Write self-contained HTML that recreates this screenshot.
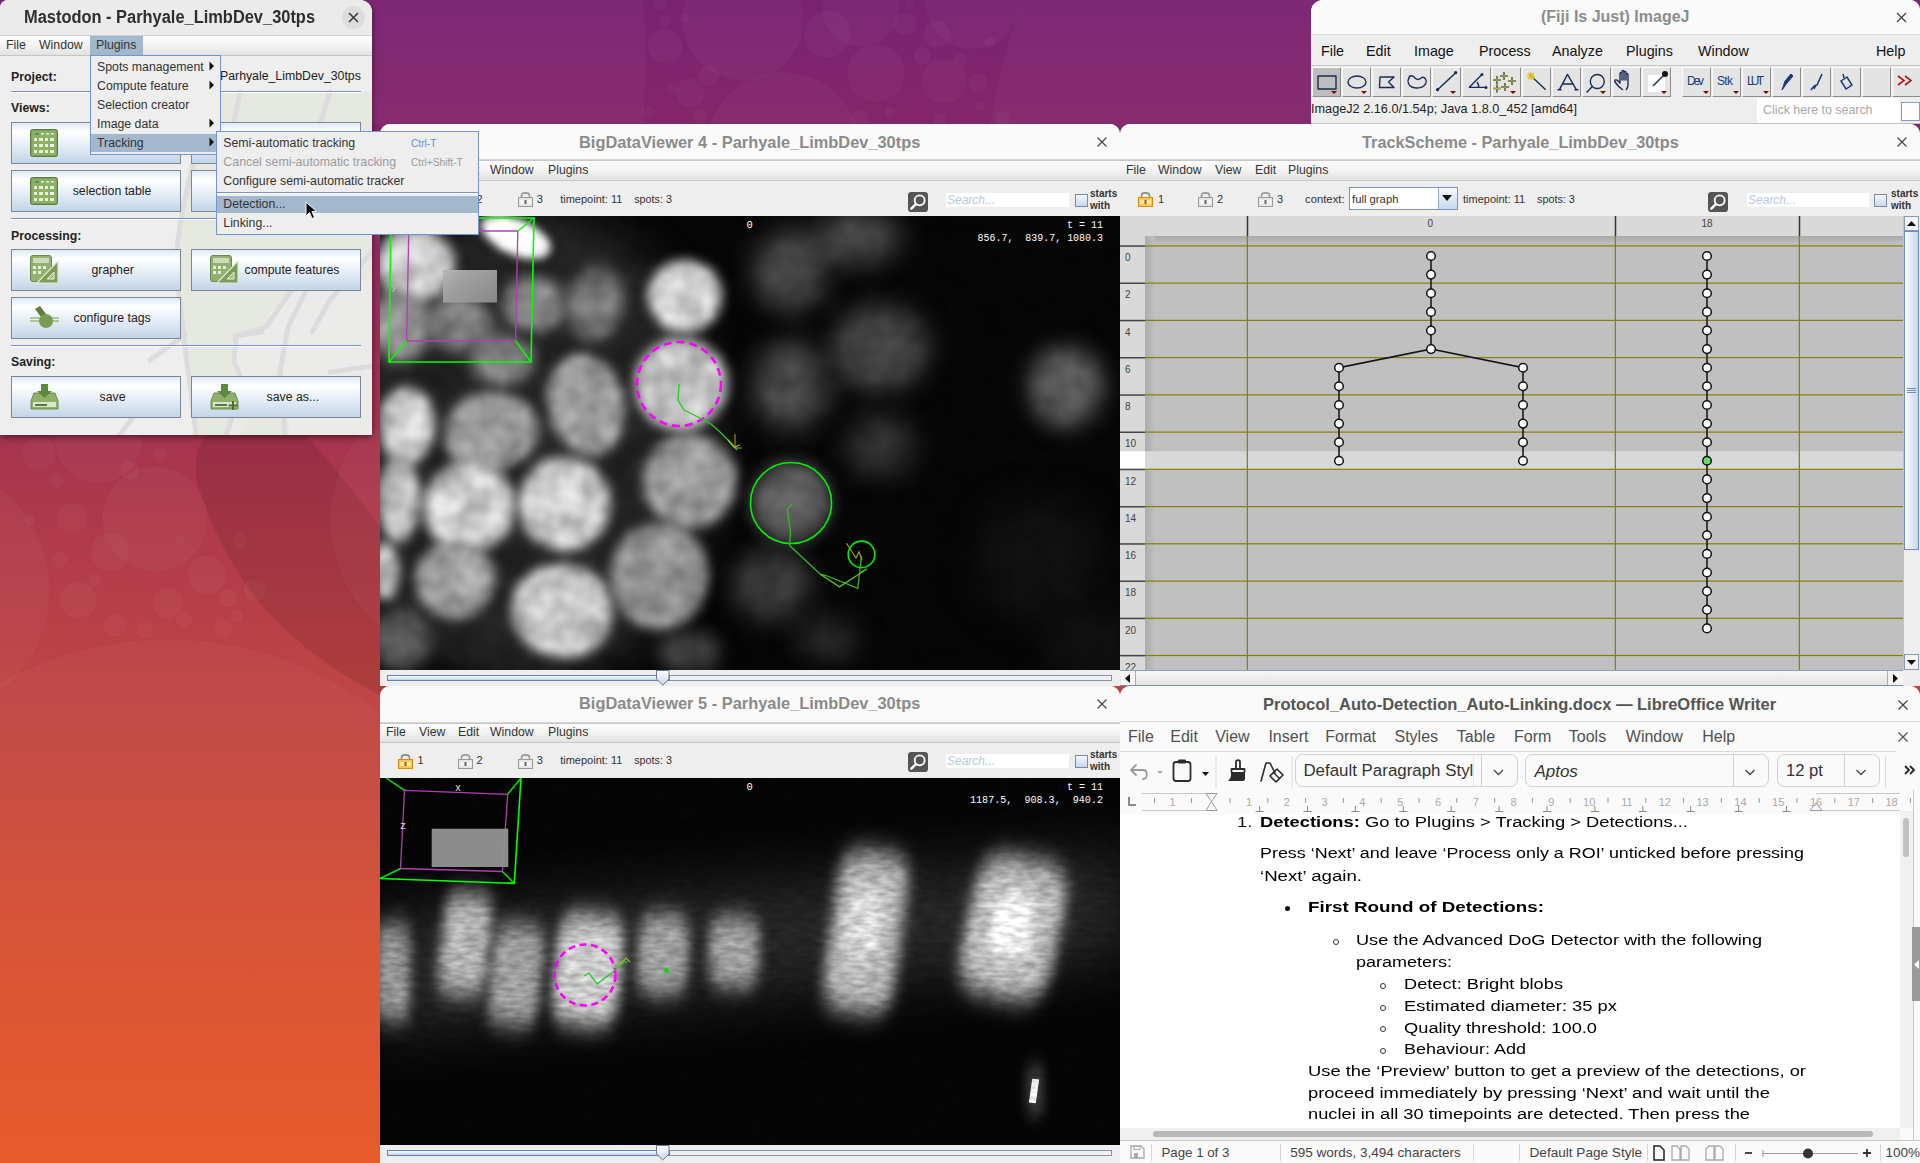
<!DOCTYPE html>
<html><head><meta charset="utf-8">
<style>
*{box-sizing:border-box}
html,body{margin:0;padding:0}
body{width:1920px;height:1163px;overflow:hidden;position:relative;font-family:"Liberation Sans",sans-serif;background:#8a2a6c}
.a{position:absolute}
.t{position:absolute;white-space:nowrap;line-height:1}
#bg{position:absolute;left:0;top:0;width:1920px;height:1163px;background:linear-gradient(180deg,#7f2776 0%,#8a2a70 12%,#a8344f 45%,#c84a3c 70%,#e45828 100%)}
.win{position:absolute;overflow:hidden;background:#eeeeee}
.ttl{position:absolute;left:0;right:0;top:0;background:#fafafa;border-bottom:1px solid #d6d6d6}
.ttx{position:absolute;font-weight:bold;font-size:17px;color:#8b8b8b;white-space:nowrap;line-height:1}
.mbar{position:absolute;left:0;right:0;background:linear-gradient(180deg,#fdfdfd 0%,#f4f4f4 45%,#e2e2e2 100%);border-top:1px solid #c8c8c8;border-bottom:1px solid #c8c8c8}
.mi{position:absolute;font-size:13px;color:#333;white-space:nowrap;line-height:1}
.lbl{position:absolute;font-size:12px;color:#333;white-space:nowrap;line-height:1}
.btn{border:1px solid #7b8794;background:linear-gradient(180deg,#dfe9f4 0%,#ffffff 22%,#e6eef7 55%,#c3d5e8 100%)}
.mono{font-family:"Liberation Mono",monospace}
</style></head>
<body>
<div id="bg"></div>
<svg id="bgsvg" class="a" style="left:0;top:0" width="1920" height="1163" viewBox="0 0 1920 1163">
<defs><linearGradient id="bgg" x1="0" y1="0" x2="0" y2="1">
<stop offset="0" stop-color="#792271"/>
<stop offset="0.107" stop-color="#84266a"/>
<stop offset="0.37" stop-color="#a6334f"/>
<stop offset="0.6" stop-color="#bf4644"/>
<stop offset="0.8" stop-color="#d64f32"/>
<stop offset="1" stop-color="#e85726"/>
</linearGradient>
<clipPath id="cTop"><rect x="0" y="0" width="1920" height="124"/></clipPath>
<clipPath id="cLeft"><rect x="0" y="430" width="390" height="733"/></clipPath></defs>
<rect width="1920" height="1163" fill="url(#bgg)"/>
<g clip-path="url(#cTop)">
<circle cx="-200" cy="62" r="846" fill="#ffffff" fill-opacity="0.032" stroke="#000" stroke-opacity="0.035" stroke-width="1"/>
<circle cx="1700" cy="250" r="722" fill="#ffffff" fill-opacity="0.032" stroke="#000" stroke-opacity="0.035" stroke-width="1"/>
<circle cx="743" cy="20" r="61" fill="#ffffff" fill-opacity="0.032" stroke="#000" stroke-opacity="0.035" stroke-width="1"/>
<circle cx="783" cy="150" r="78" fill="#ffffff" fill-opacity="0.032" stroke="#000" stroke-opacity="0.035" stroke-width="1"/>
<circle cx="861" cy="8" r="39" fill="#ffffff" fill-opacity="0.032" stroke="#000" stroke-opacity="0.035" stroke-width="1"/>
<circle cx="973" cy="0" r="49" fill="#ffffff" fill-opacity="0.032" stroke="#000" stroke-opacity="0.035" stroke-width="1"/>
<circle cx="665" cy="46" r="18" fill="#ffffff" fill-opacity="0.032" stroke="#000" stroke-opacity="0.035" stroke-width="1"/>
<circle cx="827" cy="34" r="24" fill="#ffffff" fill-opacity="0.032" stroke="#000" stroke-opacity="0.035" stroke-width="1"/>
<circle cx="876" cy="73" r="29" fill="#ffffff" fill-opacity="0.032" stroke="#000" stroke-opacity="0.035" stroke-width="1"/>
<circle cx="944" cy="81" r="23" fill="#ffffff" fill-opacity="0.032" stroke="#000" stroke-opacity="0.035" stroke-width="1"/>
<circle cx="937" cy="34" r="14" fill="#ffffff" fill-opacity="0.032" stroke="#000" stroke-opacity="0.035" stroke-width="1"/>
<circle cx="905" cy="24" r="12" fill="#ffffff" fill-opacity="0.032" stroke="#000" stroke-opacity="0.035" stroke-width="1"/>
<circle cx="690" cy="93" r="15" fill="#ffffff" fill-opacity="0.032" stroke="#000" stroke-opacity="0.035" stroke-width="1"/>
<circle cx="709" cy="76" r="11" fill="#ffffff" fill-opacity="0.032" stroke="#000" stroke-opacity="0.035" stroke-width="1"/>
<circle cx="978" cy="83" r="10" fill="#ffffff" fill-opacity="0.032" stroke="#000" stroke-opacity="0.035" stroke-width="1"/>
<circle cx="922" cy="56" r="9" fill="#ffffff" fill-opacity="0.032" stroke="#000" stroke-opacity="0.035" stroke-width="1"/>
<circle cx="660" cy="2" r="8" fill="#ffffff" fill-opacity="0.032" stroke="#000" stroke-opacity="0.035" stroke-width="1"/>
<circle cx="665" cy="21" r="6" fill="#ffffff" fill-opacity="0.032" stroke="#000" stroke-opacity="0.035" stroke-width="1"/>
<circle cx="684" cy="18" r="5" fill="#ffffff" fill-opacity="0.032" stroke="#000" stroke-opacity="0.035" stroke-width="1"/>
<circle cx="672" cy="89" r="6" fill="#ffffff" fill-opacity="0.032" stroke="#000" stroke-opacity="0.035" stroke-width="1"/>
<circle cx="961" cy="60" r="7" fill="#ffffff" fill-opacity="0.032" stroke="#000" stroke-opacity="0.035" stroke-width="1"/>
<circle cx="990" cy="42" r="6" fill="#ffffff" fill-opacity="0.032" stroke="#000" stroke-opacity="0.035" stroke-width="1"/>
<circle cx="980" cy="106" r="5" fill="#ffffff" fill-opacity="0.032" stroke="#000" stroke-opacity="0.035" stroke-width="1"/>
<circle cx="1003" cy="118" r="8" fill="#ffffff" fill-opacity="0.032" stroke="#000" stroke-opacity="0.035" stroke-width="1"/>
<circle cx="940" cy="120" r="7" fill="#ffffff" fill-opacity="0.032" stroke="#000" stroke-opacity="0.035" stroke-width="1"/>
<circle cx="890" cy="112" r="6" fill="#ffffff" fill-opacity="0.032" stroke="#000" stroke-opacity="0.035" stroke-width="1"/>
<circle cx="910" cy="4" r="5" fill="#ffffff" fill-opacity="0.032" stroke="#000" stroke-opacity="0.035" stroke-width="1"/>
<circle cx="648" cy="112" r="7" fill="#ffffff" fill-opacity="0.032" stroke="#000" stroke-opacity="0.035" stroke-width="1"/>
<circle cx="700" cy="116" r="8" fill="#ffffff" fill-opacity="0.032" stroke="#000" stroke-opacity="0.035" stroke-width="1"/>
<circle cx="860" cy="118" r="9" fill="#ffffff" fill-opacity="0.032" stroke="#000" stroke-opacity="0.035" stroke-width="1"/>
</g>
<g clip-path="url(#cLeft)">
<path d="M215 430 C190 440 192 480 205 505 C215 535 240 580 262 606 C290 636 330 672 390 700 L390 540 C360 500 330 460 300 430 Z" fill="#1a0000" fill-opacity="0.1"/>
<circle cx="-80" cy="590" r="130" fill="#ffffff" fill-opacity="0.032" stroke="#000" stroke-opacity="0.035" stroke-width="1"/>
<circle cx="155" cy="519" r="53" fill="#ffffff" fill-opacity="0.032" stroke="#000" stroke-opacity="0.035" stroke-width="1"/>
<circle cx="98" cy="440" r="44" fill="#ffffff" fill-opacity="0.032" stroke="#000" stroke-opacity="0.035" stroke-width="1"/>
<circle cx="470" cy="520" r="140" fill="#ffffff" fill-opacity="0.032" stroke="#000" stroke-opacity="0.035" stroke-width="1"/>
<circle cx="168" cy="985" r="346" fill="#ffffff" fill-opacity="0.032" stroke="#000" stroke-opacity="0.035" stroke-width="1"/>
<circle cx="39" cy="453" r="17" fill="#ffffff" fill-opacity="0.032" stroke="#000" stroke-opacity="0.035" stroke-width="1"/>
<circle cx="72" cy="518" r="16" fill="#ffffff" fill-opacity="0.032" stroke="#000" stroke-opacity="0.035" stroke-width="1"/>
<circle cx="57" cy="480" r="8" fill="#ffffff" fill-opacity="0.032" stroke="#000" stroke-opacity="0.035" stroke-width="1"/>
<circle cx="110" cy="552" r="20" fill="#ffffff" fill-opacity="0.032" stroke="#000" stroke-opacity="0.035" stroke-width="1"/>
<circle cx="78" cy="600" r="19" fill="#ffffff" fill-opacity="0.032" stroke="#000" stroke-opacity="0.035" stroke-width="1"/>
<circle cx="115" cy="625" r="12" fill="#ffffff" fill-opacity="0.032" stroke="#000" stroke-opacity="0.035" stroke-width="1"/>
<circle cx="207" cy="575" r="20" fill="#ffffff" fill-opacity="0.032" stroke="#000" stroke-opacity="0.035" stroke-width="1"/>
<circle cx="168" cy="603" r="16" fill="#ffffff" fill-opacity="0.032" stroke="#000" stroke-opacity="0.035" stroke-width="1"/>
<circle cx="145" cy="630" r="9" fill="#ffffff" fill-opacity="0.032" stroke="#000" stroke-opacity="0.035" stroke-width="1"/>
<circle cx="184" cy="620" r="9" fill="#ffffff" fill-opacity="0.032" stroke="#000" stroke-opacity="0.035" stroke-width="1"/>
<circle cx="223" cy="628" r="10" fill="#ffffff" fill-opacity="0.032" stroke="#000" stroke-opacity="0.035" stroke-width="1"/>
<circle cx="228" cy="598" r="10" fill="#ffffff" fill-opacity="0.032" stroke="#000" stroke-opacity="0.035" stroke-width="1"/>
<circle cx="255" cy="590" r="12" fill="#ffffff" fill-opacity="0.032" stroke="#000" stroke-opacity="0.035" stroke-width="1"/>
<circle cx="237" cy="616" r="7" fill="#ffffff" fill-opacity="0.032" stroke="#000" stroke-opacity="0.035" stroke-width="1"/>
<circle cx="30" cy="520" r="6" fill="#ffffff" fill-opacity="0.032" stroke="#000" stroke-opacity="0.035" stroke-width="1"/>
<circle cx="130" cy="470" r="10" fill="#ffffff" fill-opacity="0.032" stroke="#000" stroke-opacity="0.035" stroke-width="1"/>
<circle cx="160" cy="455" r="8" fill="#ffffff" fill-opacity="0.032" stroke="#000" stroke-opacity="0.035" stroke-width="1"/>
<circle cx="60" cy="560" r="9" fill="#ffffff" fill-opacity="0.032" stroke="#000" stroke-opacity="0.035" stroke-width="1"/>
<circle cx="95" cy="580" r="7" fill="#ffffff" fill-opacity="0.032" stroke="#000" stroke-opacity="0.035" stroke-width="1"/>
<circle cx="180" cy="540" r="6" fill="#ffffff" fill-opacity="0.032" stroke="#000" stroke-opacity="0.035" stroke-width="1"/>
<circle cx="240" cy="540" r="8" fill="#ffffff" fill-opacity="0.032" stroke="#000" stroke-opacity="0.035" stroke-width="1"/>
</g>
</svg>
<svg width="0" height="0" style="position:absolute">
<defs>
<symbol id="ico-table" viewBox="0 0 28 28"><rect x="0.5" y="0.5" width="27" height="27" rx="2" fill="#7fa05a" stroke="#5e7e40"/><rect x="2" y="2" width="24" height="24" rx="1" fill="#8db066"/>
<g fill="#e8f0dc"><rect x="5" y="4" width="4" height="1.5" fill="#5e7e40"/><rect x="11" y="4" width="3" height="1.5"/><rect x="16" y="4" width="3" height="1.5"/><rect x="21" y="4" width="3" height="1.5"/>
<rect x="4" y="9" width="3" height="3"/><rect x="9" y="9" width="4" height="3"/><rect x="15" y="9" width="3" height="3"/><rect x="20" y="9" width="4" height="3"/>
<rect x="4" y="15" width="3" height="3"/><rect x="9" y="15" width="4" height="3"/><rect x="15" y="15" width="3" height="3"/><rect x="20" y="15" width="4" height="3" fill="#fff"/>
<rect x="4" y="21" width="3" height="3"/><rect x="9" y="21" width="4" height="3"/><rect x="15" y="21" width="3" height="3"/><rect x="20" y="21" width="4" height="3"/></g></symbol>
<symbol id="ico-calc" viewBox="0 0 29 29"><rect x="0.5" y="0.5" width="21" height="26" rx="2.5" fill="#94b070" stroke="#6a8a4c"/><rect x="3" y="3" width="16" height="5" fill="#cddcb8"/><g fill="#e8f0dc"><rect x="3" y="11" width="3" height="3"/><rect x="8" y="11" width="3" height="3"/><rect x="13" y="11" width="3" height="3"/><rect x="3" y="16" width="3" height="3"/><rect x="8" y="16" width="3" height="3"/></g>
<path d="M28 6 L28 28 L7 28 Z" fill="#7c9c58" stroke="#dfe8d2" stroke-width="1.2"/><path d="M24 17 L24 24 L17 24 Z" fill="#a8c088" stroke="#e8f0dc" stroke-width="1"/></symbol>
<symbol id="ico-tag" viewBox="0 0 29 25"><path d="M0 12 L29 12 M0 15 L29 15" stroke="#9cba7c" stroke-width="1.6"/><path d="M5 3 L10 0 L16 8 L11 11 Z" fill="#5d7d3a"/><circle cx="16" cy="15" r="7" fill="#7a9c52"/></symbol>
<symbol id="ico-save" viewBox="0 0 29 26"><path d="M4 9 L25 9 L28 17 L28 25 L1 25 L1 17 Z" fill="#8fb06a" stroke="#6d8d4c"/><rect x="3" y="18" width="23" height="5" fill="#dbe6cc"/><rect x="5" y="20" width="12" height="2" fill="#5c7a3e"/><path d="M11 0 L18 0 L18 7 L22 7 L14.5 14 L7 7 L11 7 Z" fill="#5d8a38"/></symbol>
<symbol id="ico-saveas" viewBox="0 0 29 26"><path d="M4 9 L25 9 L28 17 L28 25 L1 25 L1 17 Z" fill="#8fb06a" stroke="#6d8d4c"/><rect x="3" y="18" width="23" height="5" fill="#dbe6cc"/><rect x="5" y="20" width="12" height="2" fill="#5c7a3e"/><path d="M11 0 L18 0 L18 7 L22 7 L14.5 14 L7 7 L11 7 Z" fill="#5d8a38"/><path d="M23 17 L23 26 M18.5 21.5 L27.5 21.5" stroke="#4d6e2c" stroke-width="2"/></symbol>
<symbol id="lock-c" viewBox="0 0 15 16"><path d="M3.5 7 L3.5 4.5 C3.5 1 11.5 1 11.5 4.5 L11.5 7" fill="none" stroke="#8a8a8a" stroke-width="1.6"/><rect x="0.5" y="6.5" width="14" height="9" fill="#f7c65a" stroke="#d98c1c"/><rect x="2" y="9" width="11" height="4" fill="#fbe39a"/><rect x="6.5" y="9" width="2" height="4" fill="#8a6a20"/></symbol>
<symbol id="lock-o" viewBox="0 0 15 16"><path d="M3.5 7 L3.5 4.5 C3.5 1 11.5 1 11.5 4.5 L11.5 6" fill="none" stroke="#9a9a9a" stroke-width="1.6"/><rect x="0.5" y="6.5" width="14" height="9" fill="#e6e6e6" stroke="#9a9a9a"/><rect x="2" y="9" width="11" height="4" fill="#f4f4f4"/><rect x="6.5" y="9" width="2" height="4" fill="#666"/></symbol>
<linearGradient id="thumbg" x1="0" y1="0" x2="0" y2="1"><stop offset="0" stop-color="#ffffff"/><stop offset="1" stop-color="#c8d8ea"/></linearGradient>
<symbol id="srch" viewBox="0 0 24 24"><rect x="0" y="0" width="24" height="24" rx="4" fill="#555"/><circle cx="14" cy="10" r="6" fill="none" stroke="#fff" stroke-width="2.2"/><path d="M9.5 14.5 L4 20" stroke="#fff" stroke-width="3" stroke-linecap="round"/></symbol>
</defs></svg>


<!-- ================= Mastodon window ================= -->
<div class="win" id="mast" style="left:0;top:0;width:372px;height:435px;border-top-right-radius:12px;border-top-left-radius:8px;background:#eeeeee;box-shadow:0 2px 6px rgba(0,0,0,0.55)">
  <div class="ttl" style="height:35px;background:#ebebeb;border-bottom:none"></div>
  <div class="ttx" style="left:24px;top:8px;font-size:18px;color:#2e2e2e;transform:scaleX(0.912);transform-origin:left">Mastodon - Parhyale_LimbDev_30tps</div>
  <div class="a" style="left:342px;top:6px;width:23px;height:23px;border-radius:50%;background:#dddddd"></div>
  <svg class="a" style="left:348px;top:12px" width="11" height="11"><path d="M1 1L10 10M10 1L1 10" stroke="#333" stroke-width="1.5"/></svg>
  <div class="mbar" style="top:35px;height:21px;border-top:1px solid #d0d0d0;border-bottom:1px solid #c4c4c4"></div>
  <div class="a" style="left:90px;top:36px;width:53px;height:19px;background:#a3b8cc"></div>
  <div class="t mi" style="left:6px;top:38.9px;font-size:12.3px">File</div>
  <div class="t mi" style="left:39px;top:38.9px;font-size:12.3px">Window</div>
  <div class="t mi" style="left:96px;top:38.9px;font-size:12.3px">Plugins</div>
  <!-- faint mastodon logo background -->
  <svg class="a" style="left:0;top:0" width="372" height="435">
    <path d="M212 92 L372 92 L372 435 L196 435 C192 380 182 320 176 260 C178 200 195 140 212 92 Z" fill="#e5e9e0"/>
    <path d="M236 335 L262 332 L270 312 L300 290 L372 280 L372 435 L290 435 L282 370 L268 375 L260 395 L240 435 L228 435 L244 385 L232 360 Z" fill="#eeeeee" opacity="0.6"/>
    <g fill="none" stroke="#dcdcdc" stroke-width="5" stroke-linejoin="round" stroke-linecap="round">
      <path d="M214 92 C200 140 180 200 176 260 C180 320 190 380 196 435"/>
      <path d="M291 291 L266 327 L236 336 L234 362 L244 384 L226 435"/>
      <path d="M306 291 L288 327 L280 372 L285 435"/>
      <path d="M236 336 L262 332"/>
      <path d="M372 252 L330 300 L312 332"/>
      <path d="M330 372 L372 366"/>
      <path d="M120 435 L145 400 M150 360 L185 335"/>
      <path d="M240 92 L228 150 L240 200"/>
      <path d="M330 92 L318 130 L335 175 L372 185"/>
    </g>
  </svg>
  <div class="t lbl" style="left:11px;top:71.0px;font-weight:bold;font-size:12.3px;color:#222">Project:</div>
  <div class="t lbl" style="left:220px;top:70.0px;font-size:12.3px;color:#222">Parhyale_LimbDev_30tps</div>
  <div class="a" style="left:11px;top:91px;width:350px;height:1px;background:#6f8fc8"></div>
  <div class="a" style="left:11px;top:92px;width:350px;height:1px;background:#ffffff"></div>
  <div class="t lbl" style="left:11px;top:102.4px;font-weight:bold;font-size:12.3px;color:#222">Views:</div>
  <!-- buttons -->
  <div class="btn a" style="left:11px;top:122px;width:170px;height:42px"></div>
  <div class="btn a" style="left:191px;top:122px;width:170px;height:42px"></div>
  <div class="btn a" style="left:11px;top:170px;width:170px;height:42px"></div>
  <div class="btn a" style="left:191px;top:170px;width:170px;height:42px"></div>
  <svg class="a" style="left:30px;top:129px" width="28" height="28"><use href="#ico-table"/></svg>
  <svg class="a" style="left:30px;top:177px" width="28" height="28"><use href="#ico-table"/></svg>
  <div class="t lbl" style="left:72.7px;top:185.0px;font-size:12.3px;color:#222">selection table</div>
  <div class="a" style="left:11px;top:218px;width:350px;height:1px;background:#6f8fc8"></div>
  <div class="a" style="left:11px;top:219px;width:350px;height:1px;background:#ffffff"></div>
  <div class="t lbl" style="left:11px;top:229.7px;font-weight:bold;font-size:12.3px;color:#222">Processing:</div>
  <div class="btn a" style="left:11px;top:249px;width:170px;height:42px"></div>
  <div class="btn a" style="left:191px;top:249px;width:170px;height:42px"></div>
  <svg class="a" style="left:30px;top:255px" width="29" height="29"><use href="#ico-calc"/></svg>
  <svg class="a" style="left:210px;top:255px" width="29" height="29"><use href="#ico-calc"/></svg>
  <div class="t lbl" style="left:91.5px;top:263.5px;font-size:12.3px;color:#222">grapher</div>
  <div class="t lbl" style="left:244.5px;top:263.5px;font-size:12.3px;color:#222">compute features</div>
  <div class="btn a" style="left:11px;top:297px;width:170px;height:42px"></div>
  <svg class="a" style="left:30px;top:306px" width="29" height="25"><use href="#ico-tag"/></svg>
  <div class="t lbl" style="left:73.5px;top:312.0px;font-size:12.3px;color:#222">configure tags</div>
  <div class="a" style="left:11px;top:345px;width:350px;height:1px;background:#6f8fc8"></div>
  <div class="a" style="left:11px;top:346px;width:350px;height:1px;background:#ffffff"></div>
  <div class="t lbl" style="left:11px;top:356.0px;font-weight:bold;font-size:12.3px;color:#222">Saving:</div>
  <div class="btn a" style="left:11px;top:376px;width:170px;height:42px"></div>
  <div class="btn a" style="left:191px;top:376px;width:170px;height:42px"></div>
  <svg class="a" style="left:30px;top:384px" width="29" height="26"><use href="#ico-save"/></svg>
  <svg class="a" style="left:210px;top:384px" width="29" height="26"><use href="#ico-saveas"/></svg>
  <div class="t lbl" style="left:99.5px;top:391.0px;font-size:12.3px;color:#222">save</div>
  <div class="t lbl" style="left:266.5px;top:391.0px;font-size:12.3px;color:#222">save as...</div>
</div>

<!-- ================= ImageJ window ================= -->
<div class="win" id="ij" style="left:1311px;top:0;width:609px;height:124px;border-bottom:1px solid #c4c4c4;border-top-left-radius:12px;border-top-right-radius:10px;background:#eeeeee">
  <div class="ttl" style="height:35px;border-bottom:1px solid #dcdcdc"></div>
  <div class="ttx" style="left:230px;top:9px;font-size:16px;color:#8d8d8d">(Fiji Is Just) ImageJ</div>
  <svg class="a" style="left:585px;top:12px" width="11" height="11"><path d="M1 1L10 10M10 1L1 10" stroke="#444" stroke-width="1.3"/></svg>
  <div class="a" style="left:0;top:64.5px;width:609px;height:1px;background:#c6c6c6"></div>
  <div class="t" style="left:10px;top:43.5px;font-size:14.3px;color:#111">File</div>
  <div class="t" style="left:55px;top:43.5px;font-size:14.3px;color:#111">Edit</div>
  <div class="t" style="left:103px;top:43.5px;font-size:14.3px;color:#111">Image</div>
  <div class="t" style="left:168px;top:43.5px;font-size:14.3px;color:#111">Process</div>
  <div class="t" style="left:241px;top:43.5px;font-size:14.3px;color:#111">Analyze</div>
  <div class="t" style="left:315px;top:43.5px;font-size:14.3px;color:#111">Plugins</div>
  <div class="t" style="left:387px;top:43.5px;font-size:14.3px;color:#111">Window</div>
  <div class="t" style="left:565px;top:43.5px;font-size:14.3px;color:#111">Help</div>
<div class="a" style="left:1px;top:67px;width:29px;height:30px;background:#bdbdbd;border-right:1px solid #8c8c8c;border-bottom:1px solid #8c8c8c;border-left:1px solid #fafafa;border-top:1px solid #fafafa"></div>
<div class="a" style="left:31px;top:67px;width:29px;height:30px;background:#e4e4e4;border-right:1px solid #8c8c8c;border-bottom:1px solid #8c8c8c;border-left:1px solid #fafafa;border-top:1px solid #fafafa"></div>
<div class="a" style="left:61px;top:67px;width:29px;height:30px;background:#e4e4e4;border-right:1px solid #8c8c8c;border-bottom:1px solid #8c8c8c;border-left:1px solid #fafafa;border-top:1px solid #fafafa"></div>
<div class="a" style="left:91px;top:67px;width:29px;height:30px;background:#e4e4e4;border-right:1px solid #8c8c8c;border-bottom:1px solid #8c8c8c;border-left:1px solid #fafafa;border-top:1px solid #fafafa"></div>
<div class="a" style="left:121px;top:67px;width:29px;height:30px;background:#e4e4e4;border-right:1px solid #8c8c8c;border-bottom:1px solid #8c8c8c;border-left:1px solid #fafafa;border-top:1px solid #fafafa"></div>
<div class="a" style="left:151px;top:67px;width:29px;height:30px;background:#e4e4e4;border-right:1px solid #8c8c8c;border-bottom:1px solid #8c8c8c;border-left:1px solid #fafafa;border-top:1px solid #fafafa"></div>
<div class="a" style="left:181px;top:67px;width:29px;height:30px;background:#e4e4e4;border-right:1px solid #8c8c8c;border-bottom:1px solid #8c8c8c;border-left:1px solid #fafafa;border-top:1px solid #fafafa"></div>
<div class="a" style="left:211px;top:67px;width:29px;height:30px;background:#e4e4e4;border-right:1px solid #8c8c8c;border-bottom:1px solid #8c8c8c;border-left:1px solid #fafafa;border-top:1px solid #fafafa"></div>
<div class="a" style="left:241px;top:67px;width:29px;height:30px;background:#e4e4e4;border-right:1px solid #8c8c8c;border-bottom:1px solid #8c8c8c;border-left:1px solid #fafafa;border-top:1px solid #fafafa"></div>
<div class="a" style="left:271px;top:67px;width:29px;height:30px;background:#e4e4e4;border-right:1px solid #8c8c8c;border-bottom:1px solid #8c8c8c;border-left:1px solid #fafafa;border-top:1px solid #fafafa"></div>
<div class="a" style="left:301px;top:67px;width:29px;height:30px;background:#e4e4e4;border-right:1px solid #8c8c8c;border-bottom:1px solid #8c8c8c;border-left:1px solid #fafafa;border-top:1px solid #fafafa"></div>
<div class="a" style="left:331px;top:67px;width:29px;height:30px;background:#e4e4e4;border-right:1px solid #8c8c8c;border-bottom:1px solid #8c8c8c;border-left:1px solid #fafafa;border-top:1px solid #fafafa"></div>
<div class="a" style="left:371px;top:67px;width:29px;height:30px;background:#e4e4e4;border-right:1px solid #8c8c8c;border-bottom:1px solid #8c8c8c;border-left:1px solid #fafafa;border-top:1px solid #fafafa"></div>
<div class="a" style="left:401px;top:67px;width:29px;height:30px;background:#e4e4e4;border-right:1px solid #8c8c8c;border-bottom:1px solid #8c8c8c;border-left:1px solid #fafafa;border-top:1px solid #fafafa"></div>
<div class="a" style="left:431px;top:67px;width:29px;height:30px;background:#e4e4e4;border-right:1px solid #8c8c8c;border-bottom:1px solid #8c8c8c;border-left:1px solid #fafafa;border-top:1px solid #fafafa"></div>
<div class="a" style="left:461px;top:67px;width:29px;height:30px;background:#e4e4e4;border-right:1px solid #8c8c8c;border-bottom:1px solid #8c8c8c;border-left:1px solid #fafafa;border-top:1px solid #fafafa"></div>
<div class="a" style="left:491px;top:67px;width:29px;height:30px;background:#e4e4e4;border-right:1px solid #8c8c8c;border-bottom:1px solid #8c8c8c;border-left:1px solid #fafafa;border-top:1px solid #fafafa"></div>
<div class="a" style="left:521px;top:67px;width:29px;height:30px;background:#e4e4e4;border-right:1px solid #8c8c8c;border-bottom:1px solid #8c8c8c;border-left:1px solid #fafafa;border-top:1px solid #fafafa"></div>
<div class="a" style="left:551px;top:67px;width:29px;height:30px;background:#e4e4e4;border-right:1px solid #8c8c8c;border-bottom:1px solid #8c8c8c;border-left:1px solid #fafafa;border-top:1px solid #fafafa"></div>
<div class="a" style="left:581px;top:67px;width:29px;height:30px;background:#e4e4e4;border-right:1px solid #8c8c8c;border-bottom:1px solid #8c8c8c;border-left:1px solid #fafafa;border-top:1px solid #fafafa"></div>

  <svg class="a" style="left:0;top:66px" width="609" height="32">
   <g fill="none" stroke="#1b2b55" stroke-width="1.4" stroke-linejoin="round">
    <rect x="7" y="10" width="18" height="13"/>
    <ellipse cx="46" cy="16" rx="9" ry="6"/>
    <path d="M69 11 L83 11 L77.5 16 L83 21.5 L68.5 21.5 Z"/>
    <path d="M98 12 C98 9 102 9 104 12 C106 14 108 14 110 12 C113 10 116 13 115 17 C113 22 106 23 101 21 C97 19 96 15 98 12 Z"/>
    <path d="M126.6 23.7 L144.7 6.7"/>
    <path d="M158 21.4 L175 21.4 M158 21.4 L171 8.5 M166 16 C167.5 18 168 19.5 167.5 21.4"/>
    <path d="M220 10 L234.7 23.7"/>
    <path d="M248.4 23.7 L256.5 8.4 L265.3 23.7 M251.5 18 L262 18 M246.5 23.7 L250.5 23.7 M263.5 23.7 L267.5 23.7"/>
    <circle cx="286.3" cy="15.5" r="7"/><path d="M281.3 20.5 L275.6 26.5"/>
    <path d="M312 24 C309 22 306 19 304 16 C303 14 305 13 307 15 L309 17 L309 8 C309 6 311 6 311 8 L311 14 L311 6 C311 4 313 4 313 6 L313 14 L313 7 C313 5 315 5 315 7 L315 14 L315 9 C315 7 317 7 317 9 L317 19 C317 21 316 23 315 24"/>
   </g>
   <g fill="#1b2b55"><circle cx="126.6" cy="23.7" r="1.6"/><circle cx="144.7" cy="6.7" r="1.6"/><circle cx="175" cy="21.4" r="1.5"/><circle cx="171" cy="8.5" r="1.5"/></g>
   <path d="M186 10 L186 18 M182 14 L190 14 M193 6 L193 14 M189 10 L197 10 M201 11 L201 19 M197 15 L205 15 M186 18.5 L186 26.5 M182 22.5 L190 22.5 M194 17 L194 25 M190 21 L198 21" stroke="#1b2b55" stroke-width="1.7"/>
   <path d="M186 10 L186 18 M182 14 L190 14 M193 6 L193 14 M189 10 L197 10 M201 11 L201 19 M197 15 L205 15 M186 18.5 L186 26.5 M182 22.5 L190 22.5 M194 17 L194 25 M190 21 L198 21" stroke="#f4e020" stroke-width="0.7"/>
   <path d="M217 7 L223 13 M223 7 L217 13 M220 6 L220 14 M216 10 L224 10" stroke="#d8c010" stroke-width="1.2"/>
<rect x="337" y="9" width="17" height="17" fill="#fff"/>
   <path d="M342 20 L353 9" stroke="#1b2b55" stroke-width="1.5"/><circle cx="354" cy="8" r="3" fill="#111"/>
   <path d="M471 24 L474 15 L480 8 L482 10 L476 17 Z" fill="#1b3a7a" stroke="#1b3a7a" stroke-width="1"/>
   <path d="M500 24 C502 21 504 19 506 19 L511 8 M503 23 L505 19" fill="none" stroke="#1b3a7a" stroke-width="1.6"/>
   <path d="M530 15 L536 11 L541 19 L535 23 Z M533 12 L532 8" fill="none" stroke="#1b3a7a" stroke-width="1.5"/>
   <g fill="#8b0000"><path d="M20 25 L26 25 L23 28Z M50 25 L56 25 L53 28Z M139 25 L145 25 L142 28Z M199 25 L205 25 L202 28Z M289 25 L295 25 L292 28Z M350 25 L356 25 L353 28Z M392 25 L398 25 L395 28Z M422 25 L428 25 L425 28Z M452 25 L458 25 L455 28Z"/></g>
   <g font-family="Liberation Sans" font-size="12" fill="#1b3a7a"><text x="376" y="19" textLength="17">Dev</text><text x="406" y="19" textLength="16">Stk</text><text x="436" y="19" textLength="17">LUT</text></g>
   <path d="M587 10 L593 14.5 L587 19 M594 10 L600 14.5 L594 19" fill="none" stroke="#b01818" stroke-width="1.6"/>
  </svg>
  <div class="t" style="left:0;top:103px;font-size:12.7px;color:#222">ImageJ2 2.16.0/1.54p; Java 1.8.0_452 [amd64]</div>
  <div class="a" style="left:446px;top:98px;width:143px;height:25px;background:#ffffff"></div>
  <div class="t" style="left:452px;top:104px;font-size:12.4px;color:#a8a8a8">Click here to search</div>
  <div class="a" style="left:590px;top:102px;width:19px;height:19px;background:#fff;border:1px solid #8a9db8"></div>
</div>

<!-- ================= BDV4 ================= -->
<div class="win" id="bdv4" style="left:380px;top:124px;width:740px;height:562px;border-top-left-radius:10px;border-top-right-radius:10px">
  <div class="ttl" style="height:36px;border-bottom:1px solid #d4d4d4"></div>
  <div class="ttx" style="left:199px;top:10px;font-size:16.4px">BigDataViewer 4 - Parhyale_LimbDev_30tps</div>
  <svg class="a" style="left:717px;top:13px" width="10" height="10"><path d="M0.5 0.5L9.5 9.5M9.5 0.5L0.5 9.5" stroke="#444" stroke-width="1.2"/></svg>
  <div class="mbar" style="top:36px;height:21px"></div>
  <div class="t mi" style="left:6px;top:40.3px;font-size:12.3px">File</div>
  <div class="t mi" style="left:39px;top:40.3px;font-size:12.3px">View</div>
  <div class="t mi" style="left:78px;top:40.3px;font-size:12.3px">Edit</div>
  <div class="t mi" style="left:110px;top:40.3px;font-size:12.3px">Window</div>
  <div class="t mi" style="left:168px;top:40.3px;font-size:12.3px">Plugins</div>
  <div class="a" style="left:0;top:57px;width:740px;height:35px;background:#eeeeee"></div>
  <svg class="a" style="left:18px;top:67px" width="15" height="16"><use href="#lock-c"/></svg>
  <div class="t lbl" style="left:37.5px;top:69.5px;font-size:11px">1</div>
  <svg class="a" style="left:78px;top:67px" width="15" height="16"><use href="#lock-o"/></svg>
  <div class="t lbl" style="left:96.5px;top:69.5px;font-size:11px">2</div>
  <svg class="a" style="left:138px;top:67px" width="15" height="16"><use href="#lock-o"/></svg>
  <div class="t lbl" style="left:156.7px;top:69.5px;font-size:11px">3</div>
  <div class="t lbl" style="left:180.2px;top:69.5px;font-size:11px">timepoint: 11</div>
  <div class="t lbl" style="left:254.2px;top:69.5px;font-size:10.8px">spots: 3</div>
  <svg class="a" style="left:528px;top:68px" width="20" height="20"><use href="#srch"/></svg>
  <div class="a" style="left:566px;top:69px;width:123px;height:14px;background:#ffffff"></div>
  <div class="t" style="left:567px;top:70px;font-size:12px;font-style:italic;color:#b8c8e0">Search...</div>
  <div class="a" style="left:695px;top:70px;width:13px;height:13px;border:1px solid #7a8aa0;background:linear-gradient(180deg,#f4f8fc,#c8d8ea)"></div>
  <div class="t" style="left:710px;top:65px;font-size:10px;font-weight:bold;color:#333">starts</div>
  <div class="t" style="left:710px;top:77px;font-size:10px;font-weight:bold;color:#333">with</div>
  <svg class="a" style="left:0;top:92px" width="740" height="454" viewBox="0 0 740 454">
<defs><filter id="bl4" x="-50%" y="-50%" width="200%" height="200%"><feGaussianBlur stdDeviation="6"/></filter><filter id="bl4b" x="-50%" y="-50%" width="200%" height="200%" color-interpolation-filters="sRGB"><feGaussianBlur stdDeviation="18"/></filter><filter id="b5" x="-60%" y="-60%" width="220%" height="220%" color-interpolation-filters="sRGB"><feGaussianBlur stdDeviation="5"/></filter><filter id="b6" x="-60%" y="-60%" width="220%" height="220%" color-interpolation-filters="sRGB"><feGaussianBlur stdDeviation="6"/></filter><filter id="b7" x="-60%" y="-60%" width="220%" height="220%" color-interpolation-filters="sRGB"><feGaussianBlur stdDeviation="7"/></filter><filter id="b8" x="-60%" y="-60%" width="220%" height="220%" color-interpolation-filters="sRGB"><feGaussianBlur stdDeviation="8"/></filter><filter id="b9" x="-60%" y="-60%" width="220%" height="220%" color-interpolation-filters="sRGB"><feGaussianBlur stdDeviation="9"/></filter><filter id="b10" x="-60%" y="-60%" width="220%" height="220%" color-interpolation-filters="sRGB"><feGaussianBlur stdDeviation="10"/></filter><filter id="b11" x="-60%" y="-60%" width="220%" height="220%" color-interpolation-filters="sRGB"><feGaussianBlur stdDeviation="11"/></filter><filter id="b13" x="-60%" y="-60%" width="220%" height="220%" color-interpolation-filters="sRGB"><feGaussianBlur stdDeviation="13"/></filter><filter id="b14" x="-60%" y="-60%" width="220%" height="220%" color-interpolation-filters="sRGB"><feGaussianBlur stdDeviation="14"/></filter><filter id="b16" x="-60%" y="-60%" width="220%" height="220%" color-interpolation-filters="sRGB"><feGaussianBlur stdDeviation="16"/></filter><filter id="b18" x="-60%" y="-60%" width="220%" height="220%" color-interpolation-filters="sRGB"><feGaussianBlur stdDeviation="18"/></filter></defs>
<defs><filter id="tex4" x="0" y="0" width="100%" height="100%" color-interpolation-filters="sRGB"><feTurbulence type="fractalNoise" baseFrequency="0.04" numOctaves="2" seed="11" result="n"/><feColorMatrix in="n" type="matrix" values="1 0 0 0 0  1 0 0 0 0  1 0 0 0 0  0 0 0 0 1" result="ng"/><feComposite in="SourceGraphic" in2="ng" operator="arithmetic" k1="0.5" k2="0.72" k3="0" k4="0"/></filter></defs>
<g filter="url(#tex4)">
<rect width="740" height="454" fill="#060606"/>
<g filter="url(#bl4b)"><ellipse cx="150" cy="230" rx="190" ry="240" fill="#222222"/></g>
<ellipse cx="35" cy="49" rx="40" ry="38" fill="rgb(205,205,205)" filter="url(#b6)"/>
<ellipse cx="135" cy="21" rx="37" ry="17" fill="rgb(255,255,255)" transform="rotate(25 135 21)" filter="url(#b5)"/>
<ellipse cx="19" cy="110" rx="30" ry="36" fill="rgb(150,150,150)" filter="url(#b7)"/>
<ellipse cx="78" cy="107" rx="34" ry="27" fill="rgb(135,135,135)" filter="url(#b7)"/>
<ellipse cx="154" cy="88" rx="32" ry="27" fill="rgb(140,140,140)" filter="url(#b7)"/>
<ellipse cx="215" cy="88" rx="29" ry="37" fill="rgb(120,120,120)" transform="rotate(10 215 88)" filter="url(#b7)"/>
<ellipse cx="305" cy="80" rx="37" ry="36" fill="rgb(220,220,220)" filter="url(#b6)"/>
<ellipse cx="301" cy="168" rx="47" ry="46" fill="rgb(200,200,200)" filter="url(#b6)"/>
<ellipse cx="122" cy="144" rx="32" ry="25" fill="rgb(135,135,135)" filter="url(#b7)"/>
<ellipse cx="206" cy="189" rx="38" ry="51" fill="rgb(165,165,165)" transform="rotate(-12 206 189)" filter="url(#b6)"/>
<ellipse cx="27" cy="209" rx="28" ry="38" fill="rgb(210,210,210)" filter="url(#b6)"/>
<ellipse cx="111" cy="215" rx="48" ry="39" fill="rgb(160,160,160)" transform="rotate(-10 111 215)" filter="url(#b6)"/>
<ellipse cx="19" cy="284" rx="21" ry="42" fill="rgb(205,205,205)" filter="url(#b6)"/>
<ellipse cx="89" cy="291" rx="46" ry="45" fill="rgb(210,210,210)" transform="rotate(-15 89 291)" filter="url(#b6)"/>
<ellipse cx="184" cy="288" rx="46" ry="47" fill="rgb(210,210,210)" filter="url(#b6)"/>
<ellipse cx="310" cy="265" rx="47" ry="47" fill="rgb(160,160,160)" transform="rotate(-20 310 265)" filter="url(#b6)"/>
<ellipse cx="75" cy="364" rx="40" ry="39" fill="rgb(165,165,165)" transform="rotate(-20 75 364)" filter="url(#b6)"/>
<ellipse cx="5" cy="355" rx="14" ry="30" fill="rgb(190,190,190)" filter="url(#b6)"/>
<ellipse cx="279" cy="360" rx="49" ry="54" fill="rgb(150,150,150)" filter="url(#b6)"/>
<ellipse cx="182" cy="395" rx="51" ry="47" fill="rgb(205,205,205)" transform="rotate(10 182 395)" filter="url(#b6)"/>
<ellipse cx="20" cy="424" rx="30" ry="30" fill="rgb(95,95,95)" filter="url(#b8)"/>
<ellipse cx="309" cy="436" rx="30" ry="20" fill="rgb(70,70,70)" filter="url(#b9)"/>
<ellipse cx="411" cy="54" rx="37" ry="41" fill="rgb(72,72,72)" filter="url(#b13)"/>
<ellipse cx="478" cy="22" rx="42" ry="26" fill="rgb(76,76,76)" filter="url(#b13)"/>
<ellipse cx="500" cy="132" rx="48" ry="43" fill="rgb(70,70,70)" filter="url(#b13)"/>
<ellipse cx="411" cy="170" rx="38" ry="45" fill="rgb(72,72,72)" filter="url(#b13)"/>
<ellipse cx="686" cy="171" rx="38" ry="40" fill="rgb(92,92,92)" filter="url(#b11)"/>
<ellipse cx="500" cy="229" rx="34" ry="30" fill="rgb(52,52,52)" filter="url(#b13)"/>
<ellipse cx="411" cy="286" rx="40" ry="40" fill="rgb(95,95,95)" filter="url(#b8)"/>
<ellipse cx="392" cy="369" rx="38" ry="35" fill="rgb(62,62,62)" filter="url(#b13)"/>
<ellipse cx="448" cy="422" rx="30" ry="20" fill="rgb(45,45,45)" filter="url(#b13)"/>
<ellipse cx="660" cy="344" rx="60" ry="60" fill="rgb(17,17,17)" filter="url(#b18)"/>
<ellipse cx="710" cy="429" rx="45" ry="35" fill="rgb(18,18,18)" filter="url(#b18)"/>
</g>
<ellipse cx="140" cy="22" rx="30" ry="12" fill="#ffffff" transform="rotate(22 140 22)" filter="url(#b5)"/>
<polygon points="11.0,2.0 154.0,2.0 151.0,146.0 9.0,146.0" fill="none" stroke="#00ff00" stroke-width="1.6"/>
<polygon points="28.8,15.0 137.8,15.0 135.6,125.0 26.6,125.0" fill="none" stroke="#b040b0" stroke-width="1.3"/>
<polyline points="154.0,2.0 137.8,15.0" fill="none" stroke="#00ff00" stroke-width="1.4"/>
<polyline points="151.0,146.0 135.6,125.0" fill="none" stroke="#00ff00" stroke-width="1.4"/>
<polyline points="9.0,146.0 26.6,125.0" fill="none" stroke="#00ff00" stroke-width="1.4"/>
<polyline points="11.0,2.0 28.8,15.0" fill="none" stroke="#00ff00" stroke-width="1.4"/>
<defs><linearGradient id="gr4" x1="0" y1="0" x2="1" y2="1"><stop offset="0" stop-color="#b4b4b4"/><stop offset="1" stop-color="#8c8c8c"/></linearGradient></defs>
<rect x="63" y="54" width="54" height="32.5" fill="url(#gr4)" opacity="0.95"/>
<text x="11" y="74" font-family="Liberation Mono" font-size="10" fill="#bbbbbb">y</text>
<circle cx="299" cy="168" r="42" fill="none" stroke="#ff00ff" stroke-width="2.6" stroke-dasharray="8 5"/>
<polyline points="299.0,168.0 298.0,184.0 304.0,194.0 320.0,202.0 331.0,208.0 340.0,216.0 351.0,227.0 357.0,234.0" fill="none" stroke="#22cc22" stroke-width="1.3"/>
<polyline points="348.0,224.0 354.0,231.0 360.0,229.0" fill="none" stroke="#99cc22" stroke-width="1.2"/>
<polyline points="355.0,218.0 355.0,232.0 362.0,232.0" fill="none" stroke="#b0a020" stroke-width="1"/>
<circle cx="411" cy="287" r="40.5" fill="none" stroke="#00ee00" stroke-width="1.6"/>
<circle cx="481.5" cy="338.4" r="13.3" fill="none" stroke="#00ee00" stroke-width="1.6"/>
<polyline points="412.7,287.4 407.3,293.2 410.5,316.5 409.5,329.4 440.6,358.4 446.0,359.5 477.8,372.4 481.5,340.0" fill="none" stroke="#33bb22" stroke-width="1.3"/>
<polyline points="440.6,358.4 459.4,370.9 486.9,353.0 481.0,356.0" fill="none" stroke="#55bb22" stroke-width="1.3"/>
<polyline points="466.5,327.2 476.0,342.0 479.0,335.8 482.0,344.0" fill="none" stroke="#a0a020" stroke-width="1.2"/>
<g font-family="Liberation Mono" font-size="10.5" fill="#ffffff">
<text x="366.5" y="12">0</text>
<text x="687" y="12" textLength="36" lengthAdjust="spacingAndGlyphs" xml:space="preserve">t = 11</text>
<text x="597.5" y="25" textLength="125.5" lengthAdjust="spacingAndGlyphs" xml:space="preserve">856.7,  839.7, 1080.3</text>
</g></svg>
  <div class="a" style="left:0;top:546px;width:740px;height:16px;background:#eeeeee"></div>
  <div class="a" style="left:7px;top:551px;width:725px;height:6px;border:1px solid #8394ac;background:#eef0f2"></div>
  <div class="a" style="left:7px;top:551px;width:283px;height:6px;border:1px solid #5f82c4;background:linear-gradient(180deg,#ffffff,#bcd0e6)"></div>
  <svg class="a" style="left:275px;top:546px" width="16" height="16"><path d="M1.5 0.5 L14 0.5 L14 9 L7.75 15 L1.5 9 Z" fill="url(#thumbg)" stroke="#6a7890"/></svg>
</div>

<!-- ================= TrackScheme ================= -->
<div class="win" id="ts" style="left:1120px;top:124px;width:800px;height:562px;border-top-left-radius:10px;border-top-right-radius:10px">
  <div class="ttl" style="height:36px;border-bottom:1px solid #d4d4d4"></div>
  <div class="ttx" style="left:242px;top:10px;font-size:16.3px">TrackScheme - Parhyale_LimbDev_30tps</div>
  <svg class="a" style="left:777px;top:13px" width="10" height="10"><path d="M0.5 0.5L9.5 9.5M9.5 0.5L0.5 9.5" stroke="#444" stroke-width="1.2"/></svg>
  <div class="mbar" style="top:36px;height:21px"></div>
  <div class="t mi" style="left:6px;top:40.3px;font-size:12.3px">File</div>
  <div class="t mi" style="left:38px;top:40.3px;font-size:12.3px">Window</div>
  <div class="t mi" style="left:95px;top:40.3px;font-size:12.3px">View</div>
  <div class="t mi" style="left:135px;top:40.3px;font-size:12.3px">Edit</div>
  <div class="t mi" style="left:168px;top:40.3px;font-size:12.3px">Plugins</div>
  <div class="a" style="left:0;top:57px;width:800px;height:35px;background:#eeeeee"></div>
  <svg class="a" style="left:17.5px;top:66.5px" width="15" height="16"><use href="#lock-c"/></svg>
  <div class="t lbl" style="left:38px;top:69.5px;font-size:11px">1</div>
  <svg class="a" style="left:77.5px;top:66.5px" width="15" height="16"><use href="#lock-o"/></svg>
  <div class="t lbl" style="left:97px;top:69.5px;font-size:11px">2</div>
  <svg class="a" style="left:137.5px;top:66.5px" width="15" height="16"><use href="#lock-o"/></svg>
  <div class="t lbl" style="left:157px;top:69.5px;font-size:11px">3</div>
  <div class="t lbl" style="left:185px;top:69.5px;font-size:11.3px">context:</div>
  <div class="a" style="left:229px;top:63px;width:109px;height:23px;border:1px solid #7394d0;background:#ffffff"></div>
  <div class="a" style="left:318px;top:64px;width:19px;height:21px;border-left:1px solid #9aaac0;background:linear-gradient(180deg,#f8fbfe,#c8d8ea)"></div>
  <svg class="a" style="left:322px;top:71px" width="10" height="6"><path d="M0 0L10 0L5 6Z" fill="#111"/></svg>
  <div class="t lbl" style="left:232px;top:69.5px;font-size:11.3px">full graph</div>
  <div class="t lbl" style="left:343px;top:69.5px;font-size:11px">timepoint: 11</div>
  <div class="t lbl" style="left:417px;top:69.5px;font-size:10.8px">spots: 3</div>
  <svg class="a" style="left:588px;top:68px" width="20" height="20"><use href="#srch"/></svg>
  <div class="a" style="left:627px;top:69px;width:122px;height:14px;background:#ffffff"></div>
  <div class="t" style="left:628px;top:70px;font-size:12px;font-style:italic;color:#b8c8e0">Search...</div>
  <div class="a" style="left:754px;top:70px;width:13px;height:13px;border:1px solid #7a8aa0;background:linear-gradient(180deg,#f4f8fc,#c8d8ea)"></div>
  <div class="t" style="left:771px;top:65px;font-size:10px;font-weight:bold;color:#333">starts</div>
  <div class="t" style="left:771px;top:77px;font-size:10px;font-weight:bold;color:#333">with</div>
<svg class="a" style="left:0;top:92px" width="783" height="454" viewBox="1120 216 783 454">
<defs><linearGradient id="shT" x1="0" y1="0" x2="0" y2="1"><stop offset="0" stop-color="#a8a8a8"/><stop offset="1" stop-color="#c0c0c0"/></linearGradient><linearGradient id="shL" x1="0" y1="0" x2="1" y2="0"><stop offset="0" stop-color="#acacac"/><stop offset="1" stop-color="#c0c0c0"/></linearGradient></defs>
<rect x="1120" y="216" width="783" height="454" fill="#c0c0c0"/>
<rect x="1120" y="216" width="783" height="20" fill="#d9d9d9"/>
<rect x="1145" y="236" width="783" height="8" fill="url(#shT)"/>
<rect x="1145" y="236" width="10" height="454" fill="url(#shL)"/>
<rect x="1120" y="216" width="25" height="454" fill="#d9d9d9"/>
<rect x="1145" y="451.3" width="783" height="18.5" fill="#d8d8d8"/>
<rect x="1120" y="451.3" width="25" height="18.5" fill="#ffffff"/>
<rect x="1145" y="245.3" width="783" height="1.2" fill="#858000"/>
<rect x="1120" y="245.3" width="25" height="1.5" fill="#444"/>
<rect x="1145" y="282.5" width="783" height="1.2" fill="#858000"/>
<rect x="1120" y="282.5" width="25" height="1.5" fill="#444"/>
<rect x="1145" y="319.8" width="783" height="1.2" fill="#858000"/>
<rect x="1120" y="319.8" width="25" height="1.5" fill="#444"/>
<rect x="1145" y="357.0" width="783" height="1.2" fill="#858000"/>
<rect x="1120" y="357.0" width="25" height="1.5" fill="#444"/>
<rect x="1145" y="394.3" width="783" height="1.2" fill="#858000"/>
<rect x="1120" y="394.3" width="25" height="1.5" fill="#444"/>
<rect x="1145" y="431.5" width="783" height="1.2" fill="#858000"/>
<rect x="1120" y="431.5" width="25" height="1.5" fill="#444"/>
<rect x="1145" y="468.7" width="783" height="1.2" fill="#858000"/>
<rect x="1120" y="468.7" width="25" height="1.5" fill="#444"/>
<rect x="1145" y="506.0" width="783" height="1.2" fill="#858000"/>
<rect x="1120" y="506.0" width="25" height="1.5" fill="#444"/>
<rect x="1145" y="543.2" width="783" height="1.2" fill="#858000"/>
<rect x="1120" y="543.2" width="25" height="1.5" fill="#444"/>
<rect x="1145" y="580.5" width="783" height="1.2" fill="#858000"/>
<rect x="1120" y="580.5" width="25" height="1.5" fill="#444"/>
<rect x="1145" y="617.7" width="783" height="1.2" fill="#858000"/>
<rect x="1120" y="617.7" width="25" height="1.5" fill="#444"/>
<rect x="1145" y="654.9" width="783" height="1.2" fill="#858000"/>
<rect x="1120" y="654.9" width="25" height="1.5" fill="#444"/>
<rect x="1246.75" y="216" width="1.5" height="20" fill="#333"/>
<rect x="1246.75" y="236" width="1.2" height="454" fill="#858000"/>
<rect x="1614.75" y="216" width="1.5" height="20" fill="#333"/>
<rect x="1614.75" y="236" width="1.2" height="454" fill="#858000"/>
<rect x="1798.75" y="216" width="1.5" height="20" fill="#333"/>
<rect x="1798.75" y="236" width="1.2" height="454" fill="#858000"/>
<g font-family="Liberation Sans" font-size="10" fill="#444">
<text x="1125" y="261.1">0</text>
<text x="1125" y="298.3">2</text>
<text x="1125" y="335.6">4</text>
<text x="1125" y="372.8">6</text>
<text x="1125" y="410.1">8</text>
<text x="1125" y="447.3">10</text>
<text x="1125" y="484.5">12</text>
<text x="1125" y="521.8">14</text>
<text x="1125" y="559.0">16</text>
<text x="1125" y="596.3">18</text>
<text x="1125" y="633.5">20</text>
<text x="1125" y="670.7">22</text>
<text x="1427.5" y="227">0</text><text x="1701.5" y="227">18</text>
</g>
<g stroke="#111" stroke-width="1.5" fill="none">
<path d="M1431 256.0 L1431 349.1 L1339 367.7 L1339 460.8 M1431 349.1 L1523 367.7 L1523 460.8 M1707 256.0 L1707 628.4"/>
</g>
<circle cx="1431" cy="256.0" r="4.3" fill="#fff" stroke="#111" stroke-width="1.5"/>
<circle cx="1431" cy="274.6" r="4.3" fill="#fff" stroke="#111" stroke-width="1.5"/>
<circle cx="1431" cy="293.2" r="4.3" fill="#fff" stroke="#111" stroke-width="1.5"/>
<circle cx="1431" cy="311.9" r="4.3" fill="#fff" stroke="#111" stroke-width="1.5"/>
<circle cx="1431" cy="330.5" r="4.3" fill="#fff" stroke="#111" stroke-width="1.5"/>
<circle cx="1431" cy="349.1" r="4.3" fill="#fff" stroke="#111" stroke-width="1.5"/>
<circle cx="1339" cy="367.7" r="4.3" fill="#fff" stroke="#111" stroke-width="1.5"/>
<circle cx="1523" cy="367.7" r="4.3" fill="#fff" stroke="#111" stroke-width="1.5"/>
<circle cx="1339" cy="386.3" r="4.3" fill="#fff" stroke="#111" stroke-width="1.5"/>
<circle cx="1523" cy="386.3" r="4.3" fill="#fff" stroke="#111" stroke-width="1.5"/>
<circle cx="1339" cy="405.0" r="4.3" fill="#fff" stroke="#111" stroke-width="1.5"/>
<circle cx="1523" cy="405.0" r="4.3" fill="#fff" stroke="#111" stroke-width="1.5"/>
<circle cx="1339" cy="423.6" r="4.3" fill="#fff" stroke="#111" stroke-width="1.5"/>
<circle cx="1523" cy="423.6" r="4.3" fill="#fff" stroke="#111" stroke-width="1.5"/>
<circle cx="1339" cy="442.2" r="4.3" fill="#fff" stroke="#111" stroke-width="1.5"/>
<circle cx="1523" cy="442.2" r="4.3" fill="#fff" stroke="#111" stroke-width="1.5"/>
<circle cx="1339" cy="460.8" r="4.3" fill="#fff" stroke="#111" stroke-width="1.5"/>
<circle cx="1523" cy="460.8" r="4.3" fill="#fff" stroke="#111" stroke-width="1.5"/>
<circle cx="1707" cy="256.0" r="4.3" fill="#fff" stroke="#111" stroke-width="1.5"/>
<circle cx="1707" cy="274.6" r="4.3" fill="#fff" stroke="#111" stroke-width="1.5"/>
<circle cx="1707" cy="293.2" r="4.3" fill="#fff" stroke="#111" stroke-width="1.5"/>
<circle cx="1707" cy="311.9" r="4.3" fill="#fff" stroke="#111" stroke-width="1.5"/>
<circle cx="1707" cy="330.5" r="4.3" fill="#fff" stroke="#111" stroke-width="1.5"/>
<circle cx="1707" cy="349.1" r="4.3" fill="#fff" stroke="#111" stroke-width="1.5"/>
<circle cx="1707" cy="367.7" r="4.3" fill="#fff" stroke="#111" stroke-width="1.5"/>
<circle cx="1707" cy="386.3" r="4.3" fill="#fff" stroke="#111" stroke-width="1.5"/>
<circle cx="1707" cy="405.0" r="4.3" fill="#fff" stroke="#111" stroke-width="1.5"/>
<circle cx="1707" cy="423.6" r="4.3" fill="#fff" stroke="#111" stroke-width="1.5"/>
<circle cx="1707" cy="442.2" r="4.3" fill="#fff" stroke="#111" stroke-width="1.5"/>
<circle cx="1707" cy="460.8" r="4.3" fill="#66dd66" stroke="#111" stroke-width="1.5"/>
<circle cx="1707" cy="479.4" r="4.3" fill="#fff" stroke="#111" stroke-width="1.5"/>
<circle cx="1707" cy="498.1" r="4.3" fill="#fff" stroke="#111" stroke-width="1.5"/>
<circle cx="1707" cy="516.7" r="4.3" fill="#fff" stroke="#111" stroke-width="1.5"/>
<circle cx="1707" cy="535.3" r="4.3" fill="#fff" stroke="#111" stroke-width="1.5"/>
<circle cx="1707" cy="553.9" r="4.3" fill="#fff" stroke="#111" stroke-width="1.5"/>
<circle cx="1707" cy="572.5" r="4.3" fill="#fff" stroke="#111" stroke-width="1.5"/>
<circle cx="1707" cy="591.2" r="4.3" fill="#fff" stroke="#111" stroke-width="1.5"/>
<circle cx="1707" cy="609.8" r="4.3" fill="#fff" stroke="#111" stroke-width="1.5"/>
<circle cx="1707" cy="628.4" r="4.3" fill="#fff" stroke="#111" stroke-width="1.5"/>
</svg>
  <!-- vertical scrollbar -->
  <div class="a" style="left:783px;top:92px;width:17px;height:454px;background:#eeeeee;border-left:1px solid #b8c4d4"></div>
  <div class="a" style="left:784px;top:92px;width:15px;height:15px;background:#f4f4f4;border:1px solid #8a9ab0"></div>
  <svg class="a" style="left:787px;top:97px" width="9" height="5"><path d="M0 5L9 5L4.5 0Z" fill="#111"/></svg>
  <div class="a" style="left:784px;top:107px;width:15px;height:319px;border:1px solid #6a8ccc;background:linear-gradient(90deg,#ffffff,#c5d6ea)"></div>
  <svg class="a" style="left:787px;top:264px" width="9" height="6"><path d="M0 0.5H9M0 2.5H9M0 4.5H9" stroke="#6a8ccc" stroke-width="1"/></svg>
  <div class="a" style="left:784px;top:530px;width:15px;height:16px;background:#f4f4f4;border:1px solid #8a9ab0"></div>
  <svg class="a" style="left:787px;top:536px" width="9" height="5"><path d="M0 0L9 0L4.5 5Z" fill="#111"/></svg>
  <!-- horizontal scrollbar -->
  <div class="a" style="left:0;top:546px;width:783px;height:16px;background:linear-gradient(180deg,#f6f6f6,#e4e4e4);border-top:1px solid #8aa0b8;border-bottom:1px solid #7890a8"></div>
  <div class="a" style="left:1px;top:547px;width:15px;height:14px;background:#f4f4f4;border-right:1px solid #9ab0c8"></div>
  <svg class="a" style="left:5px;top:550px" width="5" height="9"><path d="M5 0L5 9L0 4.5Z" fill="#111"/></svg>
  <div class="a" style="left:767px;top:547px;width:16px;height:14px;background:#f4f4f4;border-left:1px solid #9ab0c8"></div>
  <svg class="a" style="left:773px;top:550px" width="5" height="9"><path d="M0 0L0 9L5 4.5Z" fill="#111"/></svg>
  <div class="a" style="left:783px;top:546px;width:17px;height:16px;background:#eeeeee"></div>
</div>

<!-- ================= BDV5 ================= -->
<div class="win" id="bdv5" style="left:380px;top:686px;width:740px;height:477px;border-top-left-radius:10px;border-top-right-radius:10px">
  <div class="ttl" style="height:37px;border-bottom:1px solid #d4d4d4"></div>
  <div class="ttx" style="left:199px;top:9px;font-size:16.4px">BigDataViewer 5 - Parhyale_LimbDev_30tps</div>
  <svg class="a" style="left:717px;top:13px" width="10" height="10"><path d="M0.5 0.5L9.5 9.5M9.5 0.5L0.5 9.5" stroke="#444" stroke-width="1.2"/></svg>
  <div class="mbar" style="top:37px;height:20px"></div>
  <div class="t mi" style="left:6px;top:39.5px;font-size:12.3px">File</div>
  <div class="t mi" style="left:39px;top:39.5px;font-size:12.3px">View</div>
  <div class="t mi" style="left:78px;top:39.5px;font-size:12.3px">Edit</div>
  <div class="t mi" style="left:110px;top:39.5px;font-size:12.3px">Window</div>
  <div class="t mi" style="left:168px;top:39.5px;font-size:12.3px">Plugins</div>
  <div class="a" style="left:0;top:57px;width:740px;height:35px;background:#eeeeee"></div>
  <svg class="a" style="left:18px;top:67px" width="15" height="16"><use href="#lock-c"/></svg>
  <div class="t lbl" style="left:37.5px;top:68.5px;font-size:11px">1</div>
  <svg class="a" style="left:78px;top:67px" width="15" height="16"><use href="#lock-o"/></svg>
  <div class="t lbl" style="left:96.5px;top:68.5px;font-size:11px">2</div>
  <svg class="a" style="left:138px;top:67px" width="15" height="16"><use href="#lock-o"/></svg>
  <div class="t lbl" style="left:156.7px;top:68.5px;font-size:11px">3</div>
  <div class="t lbl" style="left:180.2px;top:68.5px;font-size:11px">timepoint: 11</div>
  <div class="t lbl" style="left:254.2px;top:68.5px;font-size:10.8px">spots: 3</div>
  <svg class="a" style="left:528px;top:66px" width="20" height="20"><use href="#srch"/></svg>
  <div class="a" style="left:566px;top:68px;width:123px;height:14px;background:#ffffff"></div>
  <div class="t" style="left:567px;top:69px;font-size:12px;font-style:italic;color:#b8c8e0">Search...</div>
  <div class="a" style="left:695px;top:69px;width:13px;height:13px;border:1px solid #7a8aa0;background:linear-gradient(180deg,#f4f8fc,#c8d8ea)"></div>
  <div class="t" style="left:710px;top:64px;font-size:10px;font-weight:bold;color:#333">starts</div>
  <div class="t" style="left:710px;top:76px;font-size:10px;font-weight:bold;color:#333">with</div>
  <svg class="a" style="left:0;top:92px" width="740" height="367" viewBox="0 0 740 367">
<defs><filter id="f5_0" x="-80%" y="-80%" width="260%" height="260%" color-interpolation-filters="sRGB"><feGaussianBlur stdDeviation="6 12"/></filter><filter id="f5_1" x="-80%" y="-80%" width="260%" height="260%" color-interpolation-filters="sRGB"><feGaussianBlur stdDeviation="6 12"/></filter><filter id="f5_2" x="-80%" y="-80%" width="260%" height="260%" color-interpolation-filters="sRGB"><feGaussianBlur stdDeviation="6 12"/></filter><filter id="f5_3" x="-80%" y="-80%" width="260%" height="260%" color-interpolation-filters="sRGB"><feGaussianBlur stdDeviation="6 12"/></filter><filter id="f5_4" x="-80%" y="-80%" width="260%" height="260%" color-interpolation-filters="sRGB"><feGaussianBlur stdDeviation="6 11"/></filter><filter id="f5_5" x="-80%" y="-80%" width="260%" height="260%" color-interpolation-filters="sRGB"><feGaussianBlur stdDeviation="6 11"/></filter><filter id="f5_6" x="-80%" y="-80%" width="260%" height="260%" color-interpolation-filters="sRGB"><feGaussianBlur stdDeviation="7 13"/></filter><filter id="f5_7" x="-80%" y="-80%" width="260%" height="260%" color-interpolation-filters="sRGB"><feGaussianBlur stdDeviation="6 9"/></filter><filter id="f5_8" x="-80%" y="-80%" width="260%" height="260%" color-interpolation-filters="sRGB"><feGaussianBlur stdDeviation="7 13"/></filter><filter id="f5_9" x="-80%" y="-80%" width="260%" height="260%" color-interpolation-filters="sRGB"><feGaussianBlur stdDeviation="5 8"/></filter><filter id="f5_10" x="-80%" y="-80%" width="260%" height="260%" color-interpolation-filters="sRGB"><feGaussianBlur stdDeviation="5 9"/></filter></defs>
<defs><filter id="tex5" x="0" y="0" width="100%" height="100%" color-interpolation-filters="sRGB"><feTurbulence type="fractalNoise" baseFrequency="0.07 0.2" numOctaves="2" seed="3" result="n"/><feColorMatrix in="n" type="matrix" values="1 0 0 0 0  1 0 0 0 0  1 0 0 0 0  0 0 0 0 1" result="ng"/><feComposite in="SourceGraphic" in2="ng" operator="arithmetic" k1="0.5" k2="0.74" k3="0" k4="0"/></filter></defs>
<g filter="url(#tex5)">
<rect width="740" height="367" fill="#050505"/>
<defs><filter id="glow5" x="-50%" y="-50%" width="200%" height="200%" color-interpolation-filters="sRGB"><feGaussianBlur stdDeviation="28"/></filter></defs>
<polygon points="-10.0,137.0 750.0,72.0 750.0,182.0 -10.0,257.0" fill="#262626" filter="url(#glow5)"/>
<rect x="-4.0" y="146.5" width="34" height="95" rx="11.3" fill="rgb(150,150,150)" filter="url(#f5_0)"/>
<rect x="61.0" y="116.0" width="48" height="100" rx="16.0" fill="rgb(180,180,180)" transform="rotate(6 85 166)" filter="url(#f5_1)"/>
<rect x="111.0" y="147.0" width="50" height="100" rx="16.7" fill="rgb(160,160,160)" transform="rotate(6 136 197)" filter="url(#f5_2)"/>
<rect x="175.0" y="137.0" width="66" height="110" rx="22.0" fill="rgb(205,205,205)" transform="rotate(5 208 192)" filter="url(#f5_3)"/>
<rect x="258.0" y="136.0" width="50" height="80" rx="16.7" fill="rgb(160,160,160)" transform="rotate(3 283 176)" filter="url(#f5_4)"/>
<rect x="329.0" y="139.0" width="50" height="70" rx="16.7" fill="rgb(160,160,160)" filter="url(#f5_5)"/>
<rect x="451.0" y="74.0" width="70" height="160" rx="23.3" fill="rgb(185,185,185)" transform="rotate(8 486 154)" filter="url(#f5_6)"/>
<rect x="467.0" y="112.0" width="34" height="70" rx="11.3" fill="rgb(220,220,220)" transform="rotate(8 484 147)" filter="url(#f5_7)"/>
<rect x="587.0" y="80.0" width="92" height="140" rx="30.7" fill="rgb(190,190,190)" transform="rotate(12 633 150)" filter="url(#f5_8)"/>
<rect x="611.0" y="118.0" width="40" height="60" rx="13.3" fill="rgb(248,248,248)" transform="rotate(12 631 148)" filter="url(#f5_9)"/>
<rect x="646.0" y="287.0" width="18" height="50" rx="6.0" fill="rgb(60,60,60)" filter="url(#f5_10)"/>
<rect x="650.5" y="301" width="7" height="24" fill="#f4f4f4" transform="rotate(8 654 313)"/>
</g>
<polyline points="-10.0,101.0 0.0,100.5 134.3,105.4 141.0,0.0" fill="none" stroke="#00ff00" stroke-width="1.6"/>
<polygon points="24.5,12.3 127.7,16.3 122.4,93.5 20.5,90.5" fill="none" stroke="#b040b0" stroke-width="1.3"/>
<polyline points="6.0,0.0 24.5,12.3" fill="none" stroke="#00ee00" stroke-width="1.4"/>
<polyline points="141.0,0.0 127.7,16.3" fill="none" stroke="#00ee00" stroke-width="1.4"/>
<polyline points="134.3,105.4 122.4,93.5" fill="none" stroke="#00ee00" stroke-width="1.4"/>
<polyline points="0.0,100.5 20.5,90.5" fill="none" stroke="#00ee00" stroke-width="1.4"/>
<rect x="51.7" y="50.7" width="76.6" height="38.3" fill="#939393" opacity="0.95"/>
<g font-family="Liberation Mono" font-size="10" fill="#e0e0e0">
<text x="75" y="13">x</text>
<text x="20" y="51">z</text>
</g>
<circle cx="205" cy="197" r="30.5" fill="none" stroke="#ff00ff" stroke-width="2.6" stroke-dasharray="7 4.5"/>
<polyline points="204.0,198.0 209.0,195.0 217.0,206.0 232.8,194.0 244.7,183.0 247.0,185.0" fill="none" stroke="#22cc22" stroke-width="1.3"/>
<polyline points="238.0,188.0 246.0,180.0 250.0,184.0" fill="none" stroke="#99bb22" stroke-width="1.1"/>
<circle cx="286.5" cy="192.4" r="2.6" fill="#22cc22"/>
<g font-family="Liberation Mono" font-size="10.5" fill="#ffffff">
<text x="366.5" y="12">0</text>
<text x="687" y="12" textLength="36" lengthAdjust="spacingAndGlyphs" xml:space="preserve">t = 11</text>
<text x="590" y="25" textLength="133" lengthAdjust="spacingAndGlyphs" xml:space="preserve">1187.5,  908.3,  940.2</text>
</g></svg>
  <div class="a" style="left:0;top:459px;width:740px;height:18px;background:#eeeeee"></div>
  <div class="a" style="left:7px;top:464px;width:725px;height:6px;border:1px solid #8394ac;background:#eef0f2"></div>
  <div class="a" style="left:7px;top:464px;width:283px;height:6px;border:1px solid #5f82c4;background:linear-gradient(180deg,#ffffff,#bcd0e6)"></div>
  <svg class="a" style="left:275px;top:459px" width="16" height="16"><path d="M1.5 0.5 L14 0.5 L14 9 L7.75 15 L1.5 9 Z" fill="url(#thumbg)" stroke="#6a7890"/></svg>
</div>

<!-- ================= LibreOffice ================= -->
<div class="win" id="lo" style="left:1120px;top:686px;width:800px;height:477px;border-top-left-radius:10px;border-top-right-radius:10px;background:#fafafa">
  <div class="ttl" style="height:36px;border-bottom:1px solid #d8d8d8;background:#fafafa"></div>
<div class="t" style="left:143.0px;top:9.6px;font-size:16.5px;color:#555;font-weight:bold">Protocol_Auto-Detection_Auto-Linking.docx — LibreOffice Writer</div>
<svg class="a" style="left:778px;top:14px" width="10" height="10"><path d="M0.5 0.5L9.5 9.5M9.5 0.5L0.5 9.5" stroke="#444" stroke-width="1.3"/></svg>
<div class="t" style="left:8.0px;top:42.5px;font-size:16px;color:#505050;">File</div>
<div class="t" style="left:50.3px;top:42.5px;font-size:16px;color:#505050;">Edit</div>
<div class="t" style="left:95.2px;top:42.5px;font-size:16px;color:#505050;">View</div>
<div class="t" style="left:148.4px;top:42.5px;font-size:16px;color:#505050;">Insert</div>
<div class="t" style="left:205.3px;top:42.5px;font-size:16px;color:#505050;">Format</div>
<div class="t" style="left:274.5px;top:42.5px;font-size:16px;color:#505050;">Styles</div>
<div class="t" style="left:336.8px;top:42.5px;font-size:16px;color:#505050;">Table</div>
<div class="t" style="left:394.0px;top:42.5px;font-size:16px;color:#505050;">Form</div>
<div class="t" style="left:448.8px;top:42.5px;font-size:16px;color:#505050;">Tools</div>
<div class="t" style="left:505.8px;top:42.5px;font-size:16px;color:#505050;">Window</div>
<div class="t" style="left:582.3px;top:42.5px;font-size:16px;color:#505050;">Help</div>
<svg class="a" style="left:778px;top:46px" width="10" height="10"><path d="M0.5 0.5L9.5 9.5M9.5 0.5L0.5 9.5" stroke="#555" stroke-width="1.3"/></svg>
<div class="a" style="left:0;top:64.5px;width:776px;height:1px;background:#dadada"></div>
<svg class="a" style="left:0;top:66px" width="800" height="40" viewBox="1120 752 800 40">
 <g fill="none" stroke-linecap="round" stroke-linejoin="round">
  <path d="M1131 770 L1136 765 M1131 770 L1136 775 M1131 770 L1143 770 C1148 770 1148 779 1143 779" stroke="#9c9c9c" stroke-width="1.8"/>
  <path d="M1157 771 L1163 771 L1160 774 Z" fill="#aaa" stroke="none"/>
  <rect x="1173.5" y="762" width="17" height="19" rx="2.5" stroke="#2c2c2c" stroke-width="1.8"/>
  <rect x="1178" y="759.5" width="8" height="4" rx="1" fill="#2c2c2c" stroke="none"/>
  <path d="M1202 772 L1209 772 L1205.5 776 Z" fill="#111" stroke="none"/>
  <path d="M1236 768 L1236 762 C1236 759.5 1240 759.5 1240 762 L1240 768 M1231.5 772 L1231.5 769 L1244.5 769 L1244.5 772" stroke="#2c2c2c" stroke-width="1.8"/><path d="M1231 772 L1245 772 L1245 779 C1245 780 1244 781 1243 781 L1228 781 C1230 779 1231 777 1231 775 Z" fill="#2c2c2c" stroke="none"/>
  <path d="M1261 781 L1266 763 L1270 763 L1275 773" stroke="#2c2c2c" stroke-width="1.6"/>
  <path d="M1270 776 L1277 769 L1283 775 L1276 782 Z" stroke="#2c2c2c" stroke-width="1.6"/>
  <path d="M1273.5 772.5 L1279.5 778.5" stroke="#2c2c2c" stroke-width="1.4"/>
 </g>
 <rect x="1215.5" y="756" width="1" height="32" fill="#dadada"/>
 <rect x="1291.5" y="756" width="1" height="32" fill="#dadada"/>
 <rect x="1295.5" y="754.5" width="222" height="32" rx="7" fill="#fafafa" stroke="#d0d0d0"/>
 <rect x="1481" y="755" width="1" height="31" fill="#d0d0d0"/><rect x="1473" y="755" width="1" height="31" fill="#e6e6e6"/>
 <path d="M1494 770 L1498.5 774.5 L1503 770" fill="none" stroke="#444" stroke-width="1.3"/>
 <rect x="1525.5" y="754.5" width="243" height="32" rx="7" fill="#fafafa" stroke="#d0d0d0"/>
 <rect x="1733" y="755" width="1" height="31" fill="#d0d0d0"/>
 <path d="M1745.5 770 L1750 774.5 L1754.5 770" fill="none" stroke="#444" stroke-width="1.3"/>
 <rect x="1777.5" y="754.5" width="102" height="32" rx="7" fill="#fafafa" stroke="#d0d0d0"/>
 <rect x="1844" y="755" width="1" height="31" fill="#d0d0d0"/>
 <path d="M1856.5 770 L1861 774.5 L1865.5 770" fill="none" stroke="#444" stroke-width="1.3"/>
 <rect x="1885" y="756" width="1" height="32" fill="#dadada"/>
 <path d="M1905 766 L1909 770 L1905 774 M1910 766 L1914 770 L1910 774" fill="none" stroke="#222" stroke-width="1.8"/>
</svg>
<div class="t" style="left:183.4px;top:76.7px;font-size:16.9px;color:#333;">Default Paragraph Styl</div>
<div class="t" style="left:414.4px;top:76.6px;font-size:17px;color:#333;font-style:italic">Aptos</div>
<div class="t" style="left:666.0px;top:77.0px;font-size:16.6px;color:#333;">12 pt</div>
<svg class="a" style="left:0;top:104px" width="800" height="26" viewBox="1120 790 800 26"><rect x="1120" y="790" width="800" height="26" fill="#fafafa"/><path d="M1129 797 L1129 805 L1136 805" fill="none" stroke="#666" stroke-width="1.5"/><path d="M1142 793.5 L1211 793.5 M1142 810.5 L1211 810.5 M1816 793.5 L1900 793.5 M1816 810.5 L1900 810.5" stroke="#c8c8c8" stroke-width="1"/><path d="M1206 793.5 L1217 793.5 L1211.5 801.5 Z M1206 810.5 L1217 810.5 L1211.5 801.5 Z" fill="#fafafa" stroke="#999" stroke-width="1"/><path d="M1810 810.5 L1822 810.5 L1816 803 Z" fill="#fafafa" stroke="#999" stroke-width="1"/><g font-family="Liberation Sans" font-size="11" fill="#aaa" text-anchor="middle"><text x="1172.5" y="806">1</text><text x="1249.0" y="806">1</text><text x="1286.8" y="806">2</text><text x="1324.6" y="806">3</text><text x="1362.4" y="806">4</text><text x="1400.2" y="806">5</text><text x="1438.0" y="806">6</text><text x="1475.8" y="806">7</text><text x="1513.6" y="806">8</text><text x="1551.4" y="806">9</text><text x="1589.2" y="806">10</text><text x="1627.0" y="806">11</text><text x="1664.8" y="806">12</text><text x="1702.6" y="806">13</text><text x="1740.4" y="806">14</text><text x="1778.2" y="806">15</text><text x="1816.0" y="806">16</text><text x="1853.8" y="806">17</text><text x="1891.6" y="806">18</text></g><g stroke="#999" stroke-width="1"><path d="M1154.5 798 L1154.5 803 M1191.5 798 L1191.5 803"/><path d="M1230.0 798 L1230.0 803"/><path d="M1267.8 798 L1267.8 803"/><path d="M1305.6 798 L1305.6 803"/><path d="M1343.4 798 L1343.4 803"/><path d="M1381.2 798 L1381.2 803"/><path d="M1419.0 798 L1419.0 803"/><path d="M1456.8 798 L1456.8 803"/><path d="M1494.6 798 L1494.6 803"/><path d="M1532.4 798 L1532.4 803"/><path d="M1570.2 798 L1570.2 803"/><path d="M1608.0 798 L1608.0 803"/><path d="M1645.8 798 L1645.8 803"/><path d="M1683.6 798 L1683.6 803"/><path d="M1721.4 798 L1721.4 803"/><path d="M1759.2 798 L1759.2 803"/><path d="M1797.0 798 L1797.0 803"/><path d="M1834.8 798 L1834.8 803"/><path d="M1872.6 798 L1872.6 803"/><path d="M1910.4 798 L1910.4 803"/></g><g stroke="#888" stroke-width="1" fill="none"><path d="M1255.6 811.5 L1263.6 811.5 M1259.6 806 L1259.6 811.5"/><path d="M1303.5 811.5 L1311.5 811.5 M1307.5 806 L1307.5 811.5"/><path d="M1351.4 811.5 L1359.4 811.5 M1355.4 806 L1355.4 811.5"/><path d="M1399.3 811.5 L1407.3 811.5 M1403.3 806 L1403.3 811.5"/><path d="M1447.2 811.5 L1455.2 811.5 M1451.2 806 L1451.2 811.5"/><path d="M1495.1 811.5 L1503.1 811.5 M1499.1 806 L1499.1 811.5"/><path d="M1543.0 811.5 L1551.0 811.5 M1547.0 806 L1547.0 811.5"/><path d="M1590.9 811.5 L1598.9 811.5 M1594.9 806 L1594.9 811.5"/><path d="M1638.8 811.5 L1646.8 811.5 M1642.8 806 L1642.8 811.5"/><path d="M1686.7 811.5 L1694.7 811.5 M1690.7 806 L1690.7 811.5"/><path d="M1734.6 811.5 L1742.6 811.5 M1738.6 806 L1738.6 811.5"/><path d="M1782.5 811.5 L1790.5 811.5 M1786.5 806 L1786.5 811.5"/></g></svg>
<div class="a" style="left:0;top:129px;width:780px;height:313px;background:#ffffff"></div>
<div class="a" style="left:780px;top:125px;width:12.5px;height:317px;background:#f0f0f0"></div>
<div class="a" style="left:783px;top:132px;width:6px;height:39px;border-radius:3px;background:#c0c0c0"></div>
<div class="a" style="left:792.5px;top:104px;width:1px;height:350px;background:#c8c8c8"></div>
<div class="a" style="left:792px;top:241px;width:8px;height:74px;background:#9a9a9a"></div>
<svg class="a" style="left:794px;top:274px" width="5" height="9"><path d="M5 0L5 9L0 4.5Z" fill="#fff"/></svg>
<div class="t" style="left:117.0px;top:128.0px;font-size:15.5px;color:#111;transform:scaleX(1.18);transform-origin:left;">1.</div>
<div class="t" style="left:140.0px;top:128.0px;font-size:15.5px;color:#000;transform:scaleX(1.1827956989247312);transform-origin:left;"><b>Detections:</b> Go to Plugins &gt; Tracking &gt; Detections...</div>
<div class="t" style="left:140.0px;top:159.4px;font-size:15.5px;color:#000;transform:scaleX(1.1550057325652165);transform-origin:left;">Press ‘Next’ and leave ‘Process only a ROI’ unticked before pressing</div>
<div class="t" style="left:140.0px;top:182.0px;font-size:15.5px;color:#000;transform:scaleX(1.2037765538945713);transform-origin:left;">‘Next’ again.</div>
<div class="a" style="left:164.5px;top:219.70000000000005px;width:5px;height:5px;border-radius:50%;background:#111"></div>
<div class="t" style="left:188.0px;top:213.4px;font-size:15.5px;color:#000;transform:scaleX(1.2128895208401143);transform-origin:left;font-weight:bold;">First Round of Detections:</div>
<div class="a" style="left:213.0px;top:252.8px;width:6px;height:6px;border-radius:50%;border:1px solid #333"></div>
<div class="a" style="left:260.3px;top:296.8px;width:6px;height:6px;border-radius:50%;border:1px solid #333"></div>
<div class="a" style="left:260.3px;top:318.6px;width:6px;height:6px;border-radius:50%;border:1px solid #333"></div>
<div class="a" style="left:260.3px;top:340.4px;width:6px;height:6px;border-radius:50%;border:1px solid #333"></div>
<div class="a" style="left:260.3px;top:361.8px;width:6px;height:6px;border-radius:50%;border:1px solid #333"></div>
<div class="t" style="left:236.0px;top:246.1px;font-size:15.5px;color:#000;transform:scaleX(1.1693548387096775);transform-origin:left;">Use the Advanced DoG Detector with the following</div>
<div class="t" style="left:236.0px;top:267.9px;font-size:15.5px;color:#000;transform:scaleX(1.161290322580645);transform-origin:left;">parameters:</div>
<div class="t" style="left:284.0px;top:289.7px;font-size:15.5px;color:#000;transform:scaleX(1.1754848566992777);transform-origin:left;">Detect: Bright blobs</div>
<div class="t" style="left:284.0px;top:312.0px;font-size:15.5px;color:#000;transform:scaleX(1.1826106268391539);transform-origin:left;">Estimated diameter: 35 px</div>
<div class="t" style="left:284.0px;top:333.7px;font-size:15.5px;color:#000;transform:scaleX(1.179130009775171);transform-origin:left;">Quality threshold: 100.0</div>
<div class="t" style="left:284.0px;top:354.7px;font-size:15.5px;color:#000;transform:scaleX(1.1597693136447178);transform-origin:left;">Behaviour: Add</div>
<div class="t" style="left:188.0px;top:377.0px;font-size:15.5px;color:#000;transform:scaleX(1.183535078268585);transform-origin:left;">Use the ‘Preview’ button to get a preview of the detections, or</div>
<div class="t" style="left:188.0px;top:398.7px;font-size:15.5px;color:#000;transform:scaleX(1.1856186003541458);transform-origin:left;">proceed immediately by pressing ‘Next’ and wait until the</div>
<div class="t" style="left:188.0px;top:419.7px;font-size:15.5px;color:#000;transform:scaleX(1.17737939852428);transform-origin:left;">nuclei in all 30 timepoints are detected. Then press the</div>
<div class="a" style="left:0;top:442px;width:780px;height:12px;background:#f0f0f0"></div>
<div class="a" style="left:33px;top:445px;width:720px;height:6px;border-radius:3px;background:#b8b8b8"></div>
<div class="a" style="left:0;top:454px;width:800px;height:1px;background:#c8c8c8"></div>
<div class="a" style="left:0;top:455px;width:800px;height:22px;background:#fafafa"></div>
<svg class="a" style="left:0;top:455px" width="800" height="22" viewBox="1120 1141 800 22">
 <path d="M1131 1146 L1141 1146 L1144 1149 L1144 1158 L1131 1158 Z" fill="none" stroke="#aaa" stroke-width="1.3"/>
 <rect x="1134" y="1146" width="6" height="3.5" fill="none" stroke="#aaa" stroke-width="1"/>
 <rect x="1134" y="1153" width="4" height="5" fill="#aaa"/>
 <g fill="#d4d4d4"><rect x="1151" y="1144" width="1" height="17"/><rect x="1280" y="1144" width="1" height="17"/><rect x="1473" y="1144" width="1" height="17"/><rect x="1519" y="1144" width="1" height="17"/><rect x="1647" y="1144" width="1" height="17"/><rect x="1735" y="1144" width="1" height="17"/><rect x="1880" y="1144" width="1" height="17"/></g>
 <path d="M1654 1146 L1660 1146 L1664 1150 L1664 1160 L1654 1160 Z" fill="none" stroke="#222" stroke-width="1.5"/>
 <path d="M1672 1146 L1677 1146 L1680 1149 L1680 1160 L1672 1160 Z M1681 1146 L1686 1146 L1689 1149 L1689 1160 L1681 1160 Z" fill="none" stroke="#aaa" stroke-width="1.3"/>
 <path d="M1706 1149 L1709 1146 L1714 1146 L1714 1160 L1706 1160 Z M1715 1146 L1720 1146 L1723 1149 L1723 1160 L1715 1160 Z" fill="none" stroke="#aaa" stroke-width="1.3"/>
 <path d="M1745 1153 L1752 1153" stroke="#333" stroke-width="1.8"/>
 <path d="M1762 1153.5 L1858 1153.5 M1763 1150 L1763 1157" stroke="#999" stroke-width="1"/>
 <circle cx="1808" cy="1153.5" r="5" fill="#333"/>
 <path d="M1863 1153 L1871 1153 M1867 1149 L1867 1157" stroke="#333" stroke-width="1.8"/>
</svg>
<div class="t" style="left:41.4px;top:460.3px;font-size:13.3px;color:#444;">Page 1 of 3</div>
<div class="t" style="left:170.3px;top:460.1px;font-size:13.5px;color:#444;">595 words, 3,494 characters</div>
<div class="t" style="left:409.5px;top:460.0px;font-size:13.6px;color:#444;">Default Page Style</div>
<div class="t" style="left:765.6px;top:460.1px;font-size:13.5px;color:#444;">100%</div>
</div>

<div id="menus" style="position:absolute;left:0;top:0;z-index:50">
<!-- Plugins dropdown menu -->
<div class="a" style="left:90px;top:55px;width:131px;height:100px;background:#eeeeee;border:1px solid #7394d0"></div>
<div class="a" style="left:91px;top:134.4px;width:129px;height:17.6px;background:#a3b8cc"></div>
<div class="t mi" style="left:97px;top:61.1px;font-size:12.3px">Spots management</div>
<div class="t mi" style="left:97px;top:79.9px;font-size:12.3px">Compute feature</div>
<div class="t mi" style="left:97px;top:99.1px;font-size:12.3px">Selection creator</div>
<div class="t mi" style="left:97px;top:117.9px;font-size:12.3px">Image data</div>
<div class="t mi" style="left:97px;top:136.9px;font-size:12.3px">Tracking</div>
<svg class="a" style="left:209px;top:61px" width="6" height="90"><path d="M0.5 0.5L5 5L0.5 9.5Z M0.5 19.5L5 24L0.5 28.5Z M0.5 57.5L5 62L0.5 66.5Z M0.5 76.5L5 81L0.5 85.5Z" fill="#111"/></svg>
<!-- Tracking submenu -->
<div class="a" style="left:216px;top:131px;width:263px;height:104px;background:#eeeeee;border:1px solid #7394d0"></div>
<div class="a" style="left:217px;top:192px;width:261px;height:1px;background:#7394d0"></div>
<div class="a" style="left:217px;top:193px;width:261px;height:1px;background:#ffffff"></div>
<div class="a" style="left:217px;top:195.8px;width:261px;height:16.8px;background:#a3b8cc"></div>
<div class="t mi" style="left:223.3px;top:137.4px;font-size:12.3px">Semi-automatic tracking</div>
<div class="t mi" style="left:223.3px;top:156.1px;font-size:12.4px;color:#9b9b9b">Cancel semi-automatic tracking</div>
<div class="t mi" style="left:223.3px;top:174.9px;font-size:12.3px">Configure semi-automatic tracker</div>
<div class="t mi" style="left:223.3px;top:198.1px;font-size:12.3px">Detection...</div>
<div class="t mi" style="left:223.3px;top:216.9px;font-size:12.3px">Linking...</div>
<div class="t mi" style="left:411px;top:139.0px;font-size:10.2px;color:#6b8ad0">Ctrl-T</div>
<div class="t mi" style="left:411px;top:158.0px;font-size:10.2px;color:#9b9b9b">Ctrl+Shift-T</div>
<!-- mouse cursor -->
<svg class="a" style="left:305px;top:201px" width="14" height="20"><path d="M1 1 L1 15 L4.5 11.5 L7 17.5 L9.5 16.5 L7 10.5 L11.5 10.5 Z" fill="#000" stroke="#fff" stroke-width="1"/></svg>

</div>
</body></html>
